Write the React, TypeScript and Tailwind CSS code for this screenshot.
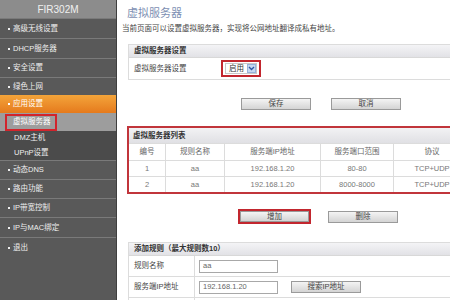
import React from 'react';

const font = { fontFamily: '"Liberation Sans", "Noto Sans CJK SC", sans-serif' };

type NavItem = { label: string; kind: 'main' | 'active' | 'sub' | 'subActive'; h: string };

const nav: NavItem[] = [
  { label: '高级无线设置', kind: 'main', h: 'h-[20px]' },
  { label: 'DHCP服务器', kind: 'main', h: 'h-[20px]' },
  { label: '安全设置', kind: 'main', h: 'h-[19px]' },
  { label: '绿色上网', kind: 'main', h: 'h-[18px]' },
  { label: '应用设置', kind: 'active', h: 'h-[18px]' },
  { label: '虚拟服务器', kind: 'subActive', h: 'h-[18px]' },
  { label: 'DMZ主机', kind: 'sub', h: 'h-[14px]' },
  { label: 'UPnP设置', kind: 'sub', h: 'h-[15px]' },
  { label: '动态DNS', kind: 'main', h: 'h-[19px]' },
  { label: '路由功能', kind: 'main', h: 'h-[19px]' },
  { label: 'IP带宽控制', kind: 'main', h: 'h-[19px]' },
  { label: 'IP与MAC绑定', kind: 'main', h: 'h-[20px]' },
  { label: '退出', kind: 'main', h: 'h-[20px]' },
];

function Sidebar() {
  return (
    <div className="w-[117px] shrink-0 flex flex-col bg-[#595959] border-r border-[#3f3f3f]">
      <div className="h-[18px] bg-[#8c8c8c] flex items-center justify-center text-[10px] text-[#f0f0f0]">FIR302M</div>
      {nav.map((n) => {
        if (n.kind === 'active') {
          return (
            <div key={n.label} className={`${n.h} flex items-center pl-[8px] text-[7.5px] text-white whitespace-nowrap bg-gradient-to-b from-[#f3a43a] to-[#e57a1c]`}>
              <span className="w-[2px] h-[2px] bg-white mr-[3px]" />
              {n.label}
            </div>
          );
        }
        if (n.kind === 'subActive') {
          return (
            <div key={n.label} className={`${n.h} flex items-center pl-[5px] bg-[#9d9d9d]`}>
              <div className="h-[17px] w-[52px] border-2 border-[#d2242c] flex items-center pl-[6px] text-[7.5px] text-white whitespace-nowrap">
                {n.label}
              </div>
            </div>
          );
        }
        if (n.kind === 'sub') {
          return (
            <div key={n.label} className={`${n.h} flex items-center pl-[14px] text-[7.5px] text-[#eeeeee] whitespace-nowrap bg-[#4b4b4b]`}>
              {n.label}
            </div>
          );
        }
        return (
          <div key={n.label} className={`${n.h} flex items-center pl-[8px] text-[7.5px] text-[#eeeeee] whitespace-nowrap border-t border-[#7a7a7a]`}>
            <span className="w-[2px] h-[2px] bg-[#eeeeee] mr-[3px]" />
            {n.label}
          </div>
        );
      })}
      <div className="flex-1" />
    </div>
  );
}

function Btn({ label, w = 'w-[70px]', h = 'h-[12px]' }: { label: string; w?: string; h?: string }) {
  return (
    <div className={`${w} ${h} border border-[#9a9a9a] bg-gradient-to-b from-[#f4f4f4] to-[#d4d4d4] flex items-center justify-center text-[7.5px] text-[#444]`}>
      {label}
    </div>
  );
}

function BoxHead({ label }: { label: string }) {
  return (
    <div className="h-[13px] flex items-center pl-[5px] text-[7.5px] font-bold text-[#333] bg-gradient-to-b from-[#f4f4f6] to-[#e2e2e6] border-b border-[#d8d8d8]">
      {label}
    </div>
  );
}

const rows = [
  ['1', 'aa', '192.168.1.20', '80-80', 'TCP+UDP'],
  ['2', 'aa', '192.168.1.20', '8000-8000', 'TCP+UDP'],
];
const cols = ['w-[37px]', 'w-[59px]', 'w-[96px]', 'w-[73px]', 'w-[76px]'];

function Row({ cells, h, head }: { cells: string[]; h: string; head?: boolean }) {
  return (
    <div className={`${h} flex border-t border-[#dcdcdc] ${head ? 'text-[#666]' : 'text-[#777]'}`}>
      {cells.map((c, i) => (
        <div key={i} className={`${cols[i]} shrink-0 flex items-center justify-center text-[7.5px] ${i < 4 ? 'border-r border-[#dcdcdc]' : ''}`}>
          {c}
        </div>
      ))}
    </div>
  );
}

function Input({ value, w }: { value: string; w: string }) {
  return (
    <div className={`${w} h-[13px] border border-[#a8a8a8] bg-white flex items-center pl-[3px] text-[7.5px] text-[#666]`}>
      {value}
    </div>
  );
}

export default function App() {
  return (
    <div className="w-[450px] h-[300px] flex overflow-hidden bg-white" style={font}>
      <Sidebar />
      <div className="flex-1 flex flex-col overflow-hidden">
        <div className="mt-[5px] ml-[10px] h-[16px] leading-[16px] text-[11px] text-[#7d8fb2]">虚拟服务器</div>
        <div className="mt-[2px] ml-[5px] h-[12px] leading-[12px] text-[7.5px] text-[#444] whitespace-nowrap">
          当前页面可以设置虚拟服务器，实现将公网地址翻译成私有地址。
        </div>

        <div className="mt-[9px] ml-[11px] w-[340px] shrink-0 border border-[#dcdcdc]">
          <BoxHead label="虚拟服务器设置" />
          <div className="h-[21px] flex items-center">
            <div className="w-[92px] pl-[5px] text-[7.5px] text-[#444]">虚拟服务器设置</div>
            <div className="w-[40px] h-[17px] border-2 border-[#c2262e] flex items-center pl-[2px]">
              <div className="h-[11px] flex items-center border border-[#c8c8c8] bg-white">
                <span className="text-[7.5px] text-[#333] px-[3px]">启用</span>
                <span className="w-[9px] h-[9px] bg-[#c5d8f2] border border-[#97b3dc] flex items-center justify-center">
                  <svg width="7" height="5" viewBox="0 0 7 5">
                    <path d="M1 1 L3.5 3.5 L6 1" stroke="#2d56a3" strokeWidth="1.4" fill="none" />
                  </svg>
                </span>
              </div>
            </div>
          </div>
        </div>

        <div className="mt-[18px] ml-[124px] flex gap-[20px]">
          <Btn label="保存" />
          <Btn label="取消" />
        </div>

        <div className="mt-[16px] ml-[10px] w-[345px] shrink-0 border-2 border-[#c1353b]">
          <div className="h-[15px] flex items-center pl-[4px] text-[7.5px] font-bold text-[#333] bg-gradient-to-b from-[#f2f2f4] to-[#e0e0e4]">
            虚拟服务器列表
          </div>
          <Row cells={['编号', '规则名称', '服务端IP地址', '服务端口范围', '协议']} h="h-[17px]" head />
          {rows.map((r) => (
            <Row key={r[0]} cells={r} h="h-[16px]" />
          ))}
        </div>

        <div className="mt-[15px] ml-[121px] flex items-center gap-[17px]">
          <div className="w-[73px] h-[15px] border-2 border-[#c2262e] flex">
            <Btn label="增加" w="flex-1" h="h-full" />
          </div>
          <Btn label="删除" />
        </div>

        <div className="mt-[18px] ml-[11px] w-[340px] shrink-0 border border-[#dcdcdc]">
          <BoxHead label="添加规则（最大规则数10）" />
          <div className="h-[21px] flex items-center border-b border-[#dcdcdc]">
            <div className="w-[66px] h-full flex items-center pl-[5px] text-[7.5px] text-[#444] border-r border-[#dcdcdc]">规则名称</div>
            <div className="pl-[4px]"><Input value="aa" w="w-[79px]" /></div>
          </div>
          <div className="h-[21px] flex items-center border-b border-[#dcdcdc]">
            <div className="w-[66px] h-full flex items-center pl-[5px] text-[7.5px] text-[#444] border-r border-[#dcdcdc]">服务端IP地址</div>
            <div className="pl-[4px] flex items-center gap-[13px]">
              <Input value="192.168.1.20" w="w-[79px]" />
              <Btn label="搜索IP地址" w="w-[70px]" h="h-[12px]" />
            </div>
          </div>
          <div className="h-[21px] flex items-center">
            <div className="w-[66px] h-full flex items-center pl-[5px] text-[7.5px] text-[#444] border-r border-[#dcdcdc]">服务端口范围</div>
            <div className="pl-[4px] flex items-center gap-[5px]">
              <Input value="8000" w="w-[35px]" />
              <Input value="8000" w="w-[35px]" />
            </div>
          </div>
        </div>
      </div>
    </div>
  );
}
